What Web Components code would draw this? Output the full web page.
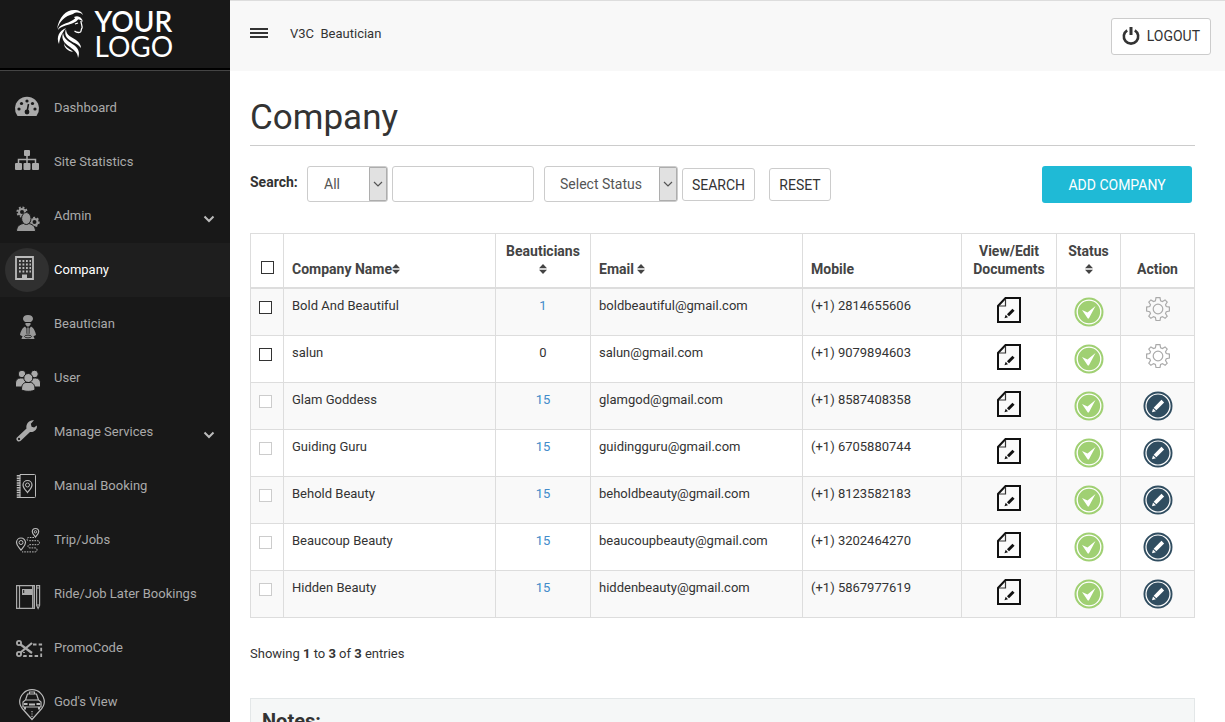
<!DOCTYPE html>
<html lang="en">
<head>
<meta charset="utf-8">
<meta name="viewport" content="width=device-width, initial-scale=1">
<title>Company</title>
<style>
  body { margin: 0; font: 13px/18px Roboto, "Liberation Sans", sans-serif; color: #333; background: #fff; }
</style>
</head>
<body>
<admin-shell>
  <side-bar slot="side">
    <nav-item icon="dashboard">Dashboard</nav-item>
    <nav-item icon="sitemap">Site Statistics</nav-item>
    <nav-item icon="admin" expandable>Admin</nav-item>
    <nav-item icon="company" active>Company</nav-item>
    <nav-item icon="beautician">Beautician</nav-item>
    <nav-item icon="users">User</nav-item>
    <nav-item icon="wrench" expandable>Manage Services</nav-item>
    <nav-item icon="booking">Manual Booking</nav-item>
    <nav-item icon="trip">Trip/Jobs</nav-item>
    <nav-item icon="later">Ride/Job Later Bookings</nav-item>
    <nav-item icon="promo">PromoCode</nav-item>
    <nav-item icon="god">God's View</nav-item>
  </side-bar>
  <top-bar slot="top">V3C&nbsp; Beautician</top-bar>
  <page-title>Company</page-title>
  <search-bar></search-bar>
  <company-table></company-table>
  <entry-count from="1" to="3" total="3"></entry-count>
  <notes-box>Notes:</notes-box>
</admin-shell>

<script>
const ICONS = {
  dashboard: [44, 44, `<path fill="#aaa" d="M12.500 30a12 12 0 1 1 19 0z"/><g fill="#181818"><circle cx="14" cy="23" r="1.600"/><circle cx="16.500" cy="17.500" r="1.600"/><circle cx="22" cy="15" r="1.600"/><circle cx="27.500" cy="17.500" r="1.600"/><circle cx="30" cy="23" r="1.600"/><circle cx="22" cy="26" r="2.400"/></g><path stroke="#181818" stroke-width="1.500" d="M22 26l1.500-8"/>`],
  sitemap: [44, 44, `<g fill="#aaa"><rect x="19" y="10" width="6" height="6" rx="1"/><rect x="10" y="23" width="7" height="7" rx="1"/><rect x="18.500" y="23" width="7" height="7" rx="1"/><rect x="27" y="23" width="7" height="7" rx="1"/></g><path fill="none" stroke="#aaa" stroke-width="1.500" d="M22 16v7M13.500 23v-3.500h17V23"/>`],
  admin: [44, 44, `<g fill="none" stroke="#999"><circle cx="17" cy="18" r="3" stroke-width="2"/><circle cx="17" cy="18" r="4.600" stroke-width="2" stroke-dasharray="1.900 1.700"/><circle cx="29.500" cy="28" r="3" stroke-width="2"/><circle cx="29.500" cy="28" r="4.200" stroke-width="2" stroke-dasharray="1.900 1.700"/></g><g fill="#999" stroke="#181818" stroke-width="1"><path d="M11.500 37.500c0-6 4-7.500 7-8h5c3 .5 7 2 7 8z"/><ellipse cx="21.300" cy="24.500" rx="4.700" ry="6"/></g>`],
  company: [44, 44, `<circle cx="22" cy="22" r="22" fill="#303030"/><path fill="none" stroke="#bbb" stroke-width="1.800" d="M11 9h17v22H11z"/><g fill="none" stroke="#bbb" stroke-width="1.800" stroke-dasharray="1.800 1.700"><path d="M14 13h12M14 16.500h12M14 20h12M14 23.500h12"/></g><path fill="#bbb" d="M17 26.500h5V31h-5z"/>`],
  beautician: [44, 44, `<g fill="#999"><path d="M23 13c3.200 0 5 1.700 5 3.800 0 1.600-1.200 2.700-2.300 3.200h-5.400c-1.100-.5-2.300-1.600-2.300-3.200 0-2.100 1.800-3.800 5-3.800z"/><path d="M20.500 21h5v1.500l-1.500 2h-2l-1.500-2z"/><path d="M20 24.500l1.500 2v5l-3.500 3-3-1.500c.5-3 2-7 5-8.500zM26 24.500l-1.500 2v5l3.500 3 3-1.500c-.5-3-2-7-5-8.500z"/><path d="M22.300 25.500h1.400v6h-1.400z"/><path d="M16.500 37c.5-3 2.500-5.500 6.500-5.500s6 2.500 6.500 5.500z"/></g><ellipse cx="23" cy="34.500" rx="3.400" ry="1.400" fill="none" stroke="#181818" stroke-width=".9"/>`],
  users: [44, 44, `<g fill="#aaa" stroke="#181818" stroke-width="1"><circle cx="17" cy="18" r="3.800"/><circle cx="29.500" cy="18" r="3.800"/><path d="M10.500 31v-4c0-3 2-5 5-5h3c3 0 4 2 4 5v4zM35.500 31v-4c0-3-2-5-5-5h-3c-3 0-4 2-4 5v4z"/><circle cx="23.300" cy="22" r="4.500"/><path d="M16.500 33.500c0-4.500 2-7 4.500-7h4.500c2.500 0 4.500 2.500 4.500 7-1.500 2.400-12 2.400-13.500 0z"/></g>`],
  wrench: [44, 44, `<path fill="#aaa" d="M31.800 15.500c.8 3.500-2.200 7-6.800 6.500L15.500 31c-2.500 1.500-5-1-3.800-3.300l9.800-9.200c-1-4.600 3-9 7.500-8.200l-3.200 3.500.8 3 2.500.8zM14 27.800a1.100 1.100 0 1 0 .1 0z" fill-rule="evenodd"/>`],
  booking: [44, 44, `<g fill="none" stroke="#bbb"><path d="M15 10.500h14.500q1 0 1 1v21q0 1-1 1H15z"/><path stroke-width="3.500" stroke-dasharray="1.500 .9" d="M13.500 11v23"/><path stroke-width="1.200" d="M22.500 28.500c-2.500-3-4.500-5-4.500-7.500a4.500 4.500 0 0 1 9 0c0 2.500-2 4.500-4.500 7.500z"/><circle cx="22.500" cy="21" r="2"/></g>`],
  trip: [44, 44, `<g fill="none" stroke="#bbb"><path stroke-width="1.200" d="M16 32c-2.500-3-4.500-4.500-4.500-7.500a4.500 4.500 0 0 1 9 0c0 3-2 4.500-4.500 7.500zM30.500 19c-2-2.300-3.200-3.500-3.200-5.300a3.200 3.200 0 0 1 6.400 0c0 1.800-1.200 3-3.200 5.300z"/><circle cx="16" cy="24.500" r="2"/><circle cx="30.500" cy="13.800" r="1.200"/><path stroke-dasharray="1.600 1" d="M29 19.500h-5q-2 0-2 1.600t2 1.600h8q2.500 0 2.500 2t-2.500 2h-7q-2 0-2 1.600t2 1.600h5q2 0 2 2t-2 2H17"/></g>`],
  later: [44, 44, `<g fill="none" stroke="#aaa"><path stroke-width="1.200" d="M11.600 13.600h17.800v22.800H11.600zM14.500 13.500v23"/><path stroke-width="1.500" d="M27.800 14v22"/><path stroke-width="1.200" d="M31.600 13.600h3v19.800l-1.500 3-1.500-3z"/><path stroke-width="1" d="M31.500 16h3M31.500 33h3"/></g><path fill="#aaa" d="M17 17h10v6H17z"/><path stroke="#181818" d="M18.700 18v3"/>`],
  promo: [44, 44, `<g fill="none" stroke="#aaa" stroke-width="1.800"><circle cx="14" cy="17" r="2.100"/><circle cx="14" cy="28" r="2.100"/><path stroke-width="2.200" d="M15.500 18.500L27 27M15.500 26.500L27 17"/><path stroke-dasharray="3.500 2.200" d="M28 18.500h8.200V30H19v-4"/></g>`],
  god: [44, 44, `<g fill="none" stroke="#bbb" stroke-width="1.200"><path d="M27 39.500l-8-9C16 27.500 14.700 25 14.700 22a12.300 12.300 0 0 1 24.600 0c0 3-1.300 5.500-4.300 8.500z"/><path d="M20.500 20l2-6h9l2 6 2.500 2v5H18v-5zM20.500 20h13M24.500 13.500v-1.500h5v1.500"/><path stroke-width="2" d="M20 27v2.500M34 27v2.500M19 24h3.500M31.500 24H35M24 24.500h6"/><path stroke-dasharray="1.200 1.200" d="M27 31v7"/></g>`],
  chevron: [12, 12, `<path fill="none" stroke="#bbb" stroke-width="2" d="M1.500 4.500L6 9l4.500-4.500"/>`],
  menu: [18, 10, `<path fill="#333" d="M0 0h18v2H0zM0 4h18v2H0zM0 8h18v2H0z"/>`],
  power: [18, 20, `<path fill="none" stroke="#333" stroke-width="2.600" d="M5.200 4.300a7.200 7.200 0 1 0 7.600 0"/><path stroke="#333" stroke-width="3" d="M9 1v8"/>`],
  sort: [8, 10, `<path fill="#444" d="M4 0l4 4.300H0zM4 10L0 5.700h8z"/>`],
  doc: [24, 26, `<path fill="#fafafa" stroke="#111" stroke-width="2" d="M8.500 1H23v24H1V9z"/><path fill="none" stroke="#333" stroke-width="1.200" d="M8.500 2v7H2"/><path stroke="#111" stroke-width="3" d="M11 18.200l5.500-5.400"/><path fill="#111" d="M7.500 21.300l1.200-3.500 2.300 2.400z"/>`],
  check: [30, 30, `<circle cx="15" cy="15" r="14.500" fill="#a0d073"/><circle cx="15" cy="15" r="11.800" fill="none" stroke="#fff" stroke-width="1.300"/><path fill="#fff" d="M8 13l5.500 2.500 8-6.500L14.800 21.500h-1z"/>`],
  gear: [24, 24, `<g fill="none" stroke="#aaa" stroke-width="1.200"><path d="M10 .7h4l.6 3.100 1.800.8 2.700-1.700 2.100 2.100-1.700 2.700.8 1.800 3.100.6v4l-3.100.6-.8 1.800 1.700 2.700-2.100 2.100-2.700-1.700-1.800.8-.6 3.100h-4l-.6-3.100-1.800-.8-2.700 1.700-2.100-2.100 1.700-2.700-.8-1.800-3.100-.6v-4l3.100-.6.800-1.800L2.800 5l2.100-2.100 2.700 1.700 1.800-.8z"/><circle cx="12" cy="12" r="4.800"/></g>`],
  edit: [30, 30, `<circle cx="15" cy="15" r="14.500" fill="#304d60"/><circle cx="15" cy="15" r="12" fill="none" stroke="#fff" stroke-width="1.200"/><path stroke="#fff" stroke-width="3.800" d="M12 18l7.800-7.800"/><path fill="#fff" d="M9 21.300l1-3.900 2.900 2.900z"/>`]
};

function define(name, css, html, setup) {
  const template = document.createElement('template');
  template.innerHTML = `<style>:host,*{box-sizing:border-box}${css}</style>${html}`;
  customElements.define(name, class extends HTMLElement {
    constructor() {
      super();
      this.attachShadow({ mode: 'open' }).append(template.content.cloneNode(true));
    }
    connectedCallback() {
      if (setup && !this.ready) { this.ready = true; setup(this, this.shadowRoot); }
    }
  });
}

define('ui-icon', `:host{display:inline-block;line-height:0;flex:none}svg{display:block}`, `<span></span>`, (el, root) => {
  const [w, h, art] = ICONS[el.getAttribute('name')];
  root.querySelector('span').innerHTML = `<svg width="${w}" height="${h}" viewBox="0 0 ${w} ${h}" aria-hidden="true">${art}</svg>`;
});

define('admin-shell', `
  :host{display:grid;grid-template-columns:230px 1fr;height:100vh;overflow:hidden}
  aside{background:#181818;overflow:hidden}
  .page{min-width:0;overflow:hidden}
  main{padding:20px 30px 24px 20px}`, `
  <aside><slot name="side"></slot></aside>
  <div class="page"><slot name="top"></slot><main><slot></slot></main></div>`);

define('brand-logo', `
  :host{display:flex;justify-content:center;align-items:center;gap:11px;height:70px;border-bottom:2px solid #000;color:#fff;
    font:28px/25px Lato,sans-serif}
  .name{width:80px;font-weight:400}
  .name::first-line{font-weight:600}`, `
  <svg width="28" height="50" viewBox="0 0 28 50" fill="#fff" aria-hidden="true">
    <path d="M1 20C3 8 10 1 18 1c5 0 8 2 9 5-3-3-7-3-10-1C9 7 4 12 1 20z"/>
    <path d="M2 21c1-6 9-6 15-10 2-1.500 3-3 6-3-1 5-6 6-10 7.500C8 17 4 18 2 21z"/>
    <path d="M18 8c4-2 8 0 9 5-2-2-4-3-7-2.500z"/>
    <path d="M3 35C0 28 3 22 10 19c-4 5-6 9-7 16z"/>
    <path d="M7 24c1 7 7 9 11 12 5 4 6 8 4 13 0-5-4-8-8-11-6-4-9-8-7-14z"/>
    <path d="M10 20c0 7 6 8 10 11 3 2 5 5 5 8-3-4-7-5-10-7-5-3-7-7-5-12z"/>
    <path d="M8 34c1 5 7 6 9 9-5-1-9-4-9-9z"/>
    <path fill="none" stroke="#fff" stroke-width="1.300" d="M25 12c0 3 1.500 5 1 7-1 1-.5 3-1.500 4-2 1-4 .5-6-1M19 15l3-1"/>
  </svg>
  <div class="name">YOUR LOGO</div>`);

define('side-bar', `
  :host{display:block}
  nav{border-top:1px solid #444;padding-top:10px}`, `
  <brand-logo></brand-logo><nav><slot></slot></nav>`);

define('nav-item', `
  :host{display:block}
  a{display:flex;align-items:center;gap:5px;height:54px;padding:0 15px 0 5px;color:#aaa;text-decoration:none}
  .label{flex:1}
  .more{padding-top:4px}
  :host([active]) a{background:#1e1e1e;color:#fff}`, `
  <a href="#"><span class="label"><slot></slot></span></a>`, (el, root) => {
  const link = root.querySelector('a');
  const icon = document.createElement('ui-icon');
  icon.setAttribute('name', el.getAttribute('icon'));
  link.prepend(icon);
  if (el.hasAttribute('expandable')) {
    const more = document.createElement('ui-icon');
    more.setAttribute('name', 'chevron');
    more.className = 'more';
    link.append(more);
  }
  if (el.hasAttribute('active')) link.setAttribute('aria-current', 'page');
});

define('top-bar', `
  :host{display:flex;align-items:center;height:71px;padding:0 14px 0 20px;background:#f8f8f8;border-top:1px solid #ddd}
  button{font:inherit;color:#333;cursor:pointer}
  .menu{border:0;background:none;padding:0 0 4px;margin-right:22px}
  .name{flex:1;padding-bottom:4px}
  .logout{display:flex;align-items:center;gap:7px;height:37px;padding:0 10px;font-size:14px;background:#fff;border:1px solid #ccc;border-radius:3px}`, `
  <button class="menu" type="button" aria-label="Menu"><ui-icon name="menu"></ui-icon></button>
  <span class="name"><slot></slot></span>
  <button class="logout" type="button"><ui-icon name="power"></ui-icon>LOGOUT</button>`);

define('page-title', `
  :host{display:block}
  h1{margin:0;border-bottom:1px solid #ccc;font-size:35px;line-height:54px;font-weight:400}`, `<h1><slot></slot></h1>`);

const arrow = `url("data:image/svg+xml,%3Csvg xmlns='http://www.w3.org/2000/svg' width='18' height='34'%3E%3Cpath d='M0 0h18v34H0z' fill='%23e1e1e1'/%3E%3Cpath d='M.5.5h17v33H.5z' fill='none' stroke='%23adadad'/%3E%3Cpath d='M5 15l4 4 4-4' fill='none' stroke='%23555' stroke-width='1.200'/%3E%3C/svg%3E")`;
define('search-bar', `
  :host{display:block;margin:20px 0 30px}
  form{display:flex;align-items:center;height:37px;font-size:14px}
  label{font-weight:700;width:57px;padding-bottom:5px}
  select,input,button{font:inherit;color:#333;background-color:#fff;border:1px solid #ccc;border-radius:3px}
  select,input{align-self:flex-start;height:36px}
  select{appearance:none;padding:0 24px 0 16px;color:#555;background-image:${arrow};background-repeat:no-repeat;background-position:right top}
  input{width:142px;margin:0 10px 0 4px;padding:0 10px}
  .field{width:81px}
  .status{width:134px;margin-right:4px;padding-left:15px}
  button{height:33px;padding:0;cursor:pointer}
  .search{width:73px;margin-right:14px}
  .reset{width:62px}
  .add{width:150px;height:37px;margin:0 3px 0 auto;border:0;background:#1fbad6;color:#fff}`, `
  <form>
    <label for="term">Search:</label>
    <select class="field" aria-label="Search field"><option>All</option></select>
    <input id="term" type="text">
    <select class="status" aria-label="Status"><option>Select Status</option></select>
    <button class="search" type="button">SEARCH</button>
    <button class="reset" type="reset">RESET</button>
    <button class="add" type="button">ADD COMPANY</button>
  </form>`);

const COMPANIES = [
  ['Bold And Beautiful', 1, 'boldbeautiful@gmail.com', '(+1) 2814655606', false],
  ['salun', 0, 'salun@gmail.com', '(+1) 9079894603', false],
  ['Glam Goddess', 15, 'glamgod@gmail.com', '(+1) 8587408358', true],
  ['Guiding Guru', 15, 'guidingguru@gmail.com', '(+1) 6705880744', true],
  ['Behold Beauty', 15, 'beholdbeauty@gmail.com', '(+1) 8123582183', true],
  ['Beaucoup Beauty', 15, 'beaucoupbeauty@gmail.com', '(+1) 3202464270', true],
  ['Hidden Beauty', 15, 'hiddenbeauty@gmail.com', '(+1) 5867977619', true]
];

define('company-table', `
  :host{display:block}
  table{width:100%;table-layout:fixed;border-collapse:collapse}
  th,td{border:1px solid #ddd;padding:8px;vertical-align:top;text-align:left}
  th{padding-bottom:9px;vertical-align:bottom;border-bottom-width:2px;color:#444;font-size:14px;font-weight:700}
  td{height:47px}
  tbody tr:nth-child(odd){background:#f9f9f9}
  .pick{padding:12px 0 0 8px}
  th.pick{padding:0 0 13px 10px}
  .mid{text-align:center;padding-left:0;padding-right:0}
  a{color:#428bca;text-decoration:none}
  ui-icon,input{vertical-align:top}
  th ui-icon{padding-top:4px}
  input{appearance:none;display:block;width:13px;height:13px;margin:0;border:1px solid #333;background:#fff}
  input:disabled{border-color:#ccc}`, `
  <table>
    <colgroup><col style="width:33px"><col style="width:212px"><col style="width:95px"><col style="width:212px"><col style="width:159px"><col style="width:95px"><col style="width:64px"><col style="width:74px"></colgroup>
    <thead><tr>
      <th class="pick"><input type="checkbox" aria-label="Select all"></th>
      <th>Company Name<ui-icon name="sort"></ui-icon></th>
      <th class="mid">Beauticians<br><ui-icon name="sort"></ui-icon></th>
      <th>Email <ui-icon name="sort"></ui-icon></th>
      <th>Mobile</th>
      <th class="mid">View/Edit<br>Documents</th>
      <th class="mid">Status<br><ui-icon name="sort"></ui-icon></th>
      <th class="mid">Action</th>
    </tr></thead>
    <tbody></tbody>
  </table>`, (el, root) => {
  root.querySelector('tbody').innerHTML = COMPANIES.map(([name, staff, email, phone, locked]) => `<tr>
    <td class="pick"><input type="checkbox" aria-label="Select ${name}"${locked ? ' disabled' : ''}></td>
    <td>${name}</td>
    <td class="mid">${staff ? `<a href="#">${staff}</a>` : staff}</td>
    <td>${email}</td>
    <td>${phone}</td>
    <td class="mid"><a href="#" aria-label="Documents of ${name}"><ui-icon name="doc"></ui-icon></a></td>
    <td class="mid"><ui-icon name="check"></ui-icon></td>
    <td class="mid"><a href="#" aria-label="Actions for ${name}"><ui-icon name="${locked ? 'edit' : 'gear'}"></ui-icon></a></td>
  </tr>`).join('');
});

define('entry-count', `:host{display:block;margin:27px 0 35px}`, `Showing <b class="from"></b> to <b class="to"></b> of <b class="total"></b> entries`, (el, root) => {
  for (const key of ['from', 'to', 'total']) root.querySelector('.' + key).textContent = el.getAttribute(key);
});

define('notes-box', `
  :host{display:block;padding:10px 11px 24px;background:#f5f7f7;border:1px solid #e3e7e8}
  h2{margin:0;font-size:20px;line-height:24px;font-weight:700}`, `<h2><slot></slot></h2>`);
</script>
</body>
</html>
